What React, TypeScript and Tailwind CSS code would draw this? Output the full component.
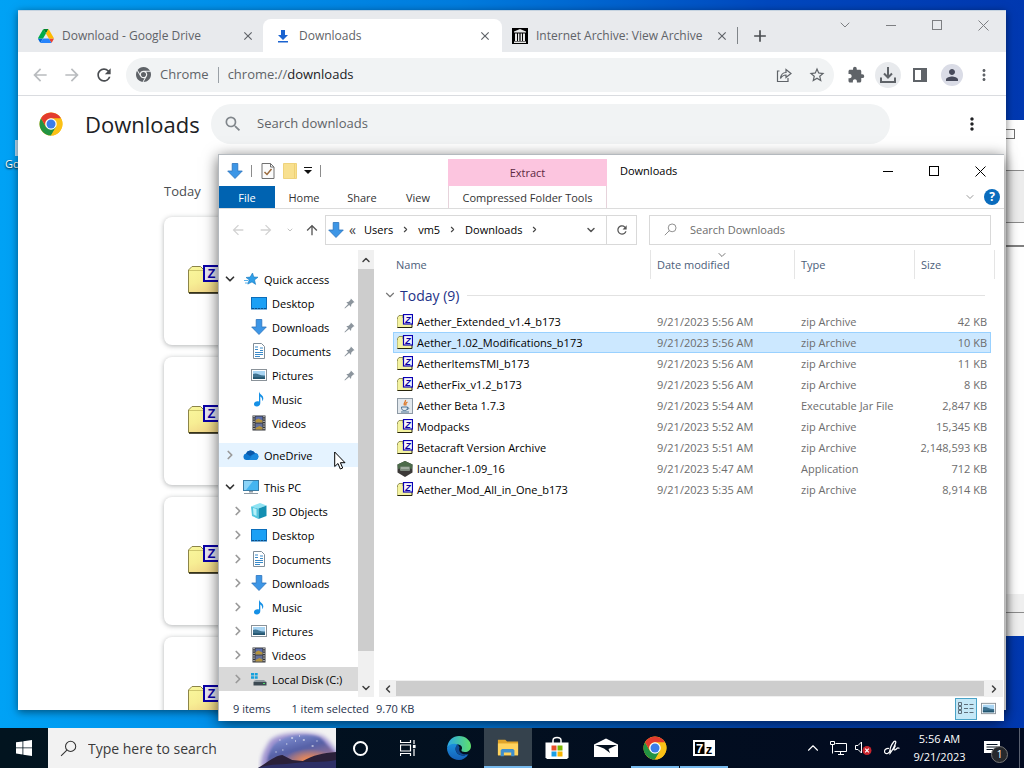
import type { ReactNode } from 'react';
import clsx from 'clsx';
import {
  MdAdd,
  MdArrowBack,
  MdArrowForward,
  MdClose,
  MdExtension,
  MdMoreVert,
  MdPerson,
  MdRefresh,
  MdSearch,
  MdStarOutline,
} from 'react-icons/md';
import { FaChrome } from 'react-icons/fa6';
import { ChevronDown, ChevronRight, ChevronUp, ChevronLeft } from 'lucide-react';

type IconProps = { className?: string };

/* ---------- icons ---------- */

function ChromeLogo({ className }: IconProps) {
  return (
    <svg viewBox="0 0 48 48" className={className} aria-hidden="true">
      <circle cx="24" cy="24" r="23" fill="#fbc116" />
      <path d="M4.1 12.5 A23 23 0 0 0 24 47 L34 29.8 L24 24 L14 29.8Z" fill="#229342" />
      <path d="M43.9 12.5 A23 23 0 0 1 24 47 L34 29.8 A11.5 11.5 0 0 0 24 12.5Z" fill="#fbc116" />
      <path d="M4.1 12.5 A23 23 0 0 1 43.9 12.5 H24 A11.5 11.5 0 0 0 14 29.8Z" fill="#e33b2e" />
      <circle cx="24" cy="24" r="11.5" fill="#fff" />
      <circle cx="24" cy="24" r="9" fill="#3b7de8" />
    </svg>
  );
}

function DriveLogo({ className }: IconProps) {
  return (
    <svg viewBox="0 0 88 78" className={className} aria-hidden="true">
      <path d="M6.6 66.9l3.9 6.6c.8 1.4 2 2.5 3.3 3.3L27.5 53H0c0 1.5.4 3.1 1.2 4.5z" fill="#0066da" />
      <path d="M43.7 25L29.9 1.2c-1.4.8-2.5 1.9-3.3 3.3L1.2 48.5A9 9 0 0 0 0 53h27.5z" fill="#00ac47" />
      <path d="M73.6 76.8c1.3-.8 2.5-1.9 3.3-3.3l1.6-2.8 7.6-13.2c.8-1.4 1.2-3 1.2-4.5H59.8l5.9 11.5z" fill="#ea4335" />
      <path d="M43.7 25L57.4 1.2C56.1.4 54.5 0 52.9 0H34.4c-1.6 0-3.2.5-4.5 1.2z" fill="#00832d" />
      <path d="M59.8 53H27.5L13.8 76.8c1.3.8 2.9 1.2 4.5 1.2h50.8c1.6 0 3.2-.5 4.5-1.2z" fill="#2684fc" />
      <path d="M73.4 26.5L60.7 4.5c-.8-1.4-2-2.5-3.3-3.3L43.7 25l16.1 28h27.5c0-1.5-.4-3.1-1.2-4.5z" fill="#ffba00" />
    </svg>
  );
}

function DownloadTabIcon({ className }: IconProps) {
  return (
    <svg viewBox="0 0 16 16" className={className} aria-hidden="true">
      <path d="M6 2h4v5h3l-5 5-5-5h3zM3 13h10v1.5H3z" fill="#1a63d0" />
    </svg>
  );
}

function ArchiveIcon({ className }: IconProps) {
  return (
    <svg viewBox="0 0 16 16" className={className} aria-hidden="true">
      <rect width="16" height="16" fill="#000" />
      <path d="M8 1l6 2.5v1H2v-1zM3 5.5h2V13H3zM6 5.5h1.4V13H6zM8.6 5.5H10V13H8.6zM11 5.5h2V13h-2zM2 13.5h12V15H2z" fill="#e8e8e8" />
    </svg>
  );
}

function ShareIcon({ className }: IconProps) {
  return (
    <svg viewBox="0 0 16 16" className={className} fill="none" stroke="currentColor" strokeWidth="1.2" aria-hidden="true">
      <path d="M3.5 4H1.5v10.5H12V11" />
      <path d="M4.5 11.5C5 7.5 7.5 5.5 10 5.5V2.5L15 6.5L10 10.5V8C7.5 8 6 9 4.5 11.5Z" />
    </svg>
  );
}

function TrayDownloadIcon({ className }: IconProps) {
  return (
    <svg viewBox="0 0 16 16" className={className} fill="none" stroke="currentColor" strokeWidth="2" aria-hidden="true">
      <path d="M8 0v10M4 6.5l4 4 4-4M1 10.5V15h14v-4.5" />
    </svg>
  );
}

function SidePanelIcon({ className }: IconProps) {
  return (
    <svg viewBox="0 0 16 16" className={className} aria-hidden="true">
      <path d="M1 1h14v14H1zM3 3v10h6V3z" fillRule="evenodd" fill="currentColor" />
    </svg>
  );
}

function ZipIcon({ className }: IconProps) {
  return (
    <svg viewBox="0 0 16 16" className={className} aria-hidden="true">
      <path d="M.5 13.500V3.500L2 1.500h4v12z" fill="#f4f3a0" stroke="#7d7a3c" strokeWidth=".8" />
      <path d="M.5 5.500L2 4h13v9.500H.5z" fill="#f4f3a0" />
      <path d="M.5 13.500h14.500V10" fill="none" stroke="#26240c" />
      <rect x="6.500" y=".5" width="9" height="9.500" fill="#f4f4fc" stroke="#0a00b4" strokeWidth="1.200" />
      <text x="11" y="8.500" textAnchor="middle" fontFamily="Liberation Sans, sans-serif" fontWeight="700" fontStyle="italic" fontSize="9" fill="#0a00a0">
        Z
      </text>
    </svg>
  );
}

function LargeZipIcon({ className }: IconProps) {
  return (
    <svg viewBox="0 0 36 29" className={className} aria-hidden="true">
      <defs>
        <linearGradient id="folder-body" x1="0" x2=".4" y1="0" y2="1">
          <stop offset="0" stopColor="#f9f79c" />
          <stop offset=".6" stopColor="#f7ee94" />
          <stop offset="1" stopColor="#f2d98a" />
        </linearGradient>
      </defs>
      <path d="M.5 27.500V5l3.500-3.500h8.500L16 5h18v22.500z" fill="url(#folder-body)" stroke="#8c8548" />
      <path d="M1 5.500h15" stroke="#cfc76e" />
      <path d="M1 28h34" stroke="#1c1a08" strokeWidth="1.500" />
      <rect x="16" y="1" width="15" height="15" fill="#e6e6f4" stroke="#0a00a8" strokeWidth="2" />
      <text x="23.500" y="13" textAnchor="middle" fontFamily="Liberation Sans, sans-serif" fontWeight="700" fontSize="13" fill="#0a00a8">
        Z
      </text>
    </svg>
  );
}

function JarIcon({ className }: IconProps) {
  return (
    <svg viewBox="0 0 16 16" className={className} aria-hidden="true">
      <rect x=".5" y=".5" width="15" height="15" fill="#e2e8ed" stroke="#8d99a4" />
      <path d="M8.5 2C9 4 6 4.500 7.500 7.500M10.500 4C8 5 8.500 6 9 7.500" stroke="#dd7a2b" strokeWidth="1.300" fill="none" />
      <path d="M4.500 9h6c0 3-1 3.500-3 3.500s-3-.5-3-3.500zM10.500 9.500c2 0 1.500 2-.5 2M4 14h8" stroke="#4d7495" fill="none" />
    </svg>
  );
}

function LauncherIcon({ className }: IconProps) {
  return (
    <svg viewBox="0 0 16 16" className={className} aria-hidden="true">
      <path d="M8 0l7.500 3.500v8L8 16 .5 11.500v-8z" fill="#3c3a38" />
      <path d="M8 0l7.500 3.500L15 8 8 6.500 1 8 .5 3.500z" fill="#4c6b4a" />
      <rect x="3" y="5.500" width="10" height="4.500" rx="1" fill="#7f8c7f" />
      <path d="M4 7h8" stroke="#c2cdc2" />
    </svg>
  );
}

function BlueArrow({ className }: IconProps) {
  return (
    <svg viewBox="0 0 16 16" className={className} aria-hidden="true">
      <path d="M5.200.5h5.600v7.500h4.500L8 15.500.7 8h4.500z" fill="#3d96e6" stroke="#2a72bd" strokeWidth=".8" />
    </svg>
  );
}

function DesktopIcon({ className }: IconProps) {
  return (
    <svg viewBox="0 0 16 16" className={className} aria-hidden="true">
      <rect x=".5" y="2.500" width="15" height="11.500" fill="#1ba0f5" stroke="#0b6dba" />
      <path d="M1 13.500h14" stroke="#0a4f88" strokeDasharray="2 1" />
    </svg>
  );
}

function DocumentIcon({ className }: IconProps) {
  return (
    <svg viewBox="0 0 16 16" className={className} aria-hidden="true">
      <path d="M2.500.5h8l3 3v12h-11z" fill="#fff" stroke="#7f8d99" />
      <path d="M4 4h3M9 5h3M4 6.500h3M9 7.500h3M4 9.500h8M4 11.500h8M4 13.500h5" stroke="#3a8ac9" />
    </svg>
  );
}

function PictureIcon({ className }: IconProps) {
  return (
    <svg viewBox="0 0 16 16" className={className} aria-hidden="true">
      <rect x=".5" y="2.500" width="15" height="11" fill="#fff" stroke="#8a9299" />
      <rect x="2" y="4" width="12" height="8" fill="#a9d5f3" />
      <path d="M2 7c4-2 6 2 12 1.500V12H2z" fill="#3f7391" />
      <path d="M2 10c4 1 8-.5 12 .5V12H2z" fill="#24566f" />
    </svg>
  );
}

function MusicIcon({ className }: IconProps) {
  return (
    <svg viewBox="0 0 16 16" className={className} aria-hidden="true">
      <path d="M8 .5c.5 3 4.800 3.500 4.300 7.500-.2 1-.6 1.500-1.200 2 .5-2.500-.8-4-1.800-4.500V12c0 2-1.500 3.500-3.500 3.500S3 14.500 3 13c0-2 2.500-3.300 5-2.500z" fill="#1590e6" />
    </svg>
  );
}

function VideoIcon({ className }: IconProps) {
  return (
    <svg viewBox="0 0 16 16" className={className} aria-hidden="true">
      <rect x="1.500" y=".5" width="13" height="15" fill="#34363a" />
      <path d="M3 1v14M13 1v14" stroke="#e2e2e2" strokeWidth="1.200" strokeDasharray="1.200 1.200" />
      <rect x="4.500" y="1.500" width="7" height="6" fill="#5c6fae" />
      <rect x="4.500" y="8.500" width="7" height="6" fill="#64719c" />
      <path d="M4.500 5l3-1.500 4 2v2h-7zM4.500 13l4-2 3 1.500v2h-7z" fill="#b4933d" />
    </svg>
  );
}

function StarIcon({ className }: IconProps) {
  return (
    <svg viewBox="0 0 16 16" className={className} aria-hidden="true">
      <path d="M9.500 2l1.300 4 4.200.2-3.500 2.700 1.100 4.500-3.600-2.500-4.200 2.200 1.400-4.300L3 6.500l4.100-.4z" fill="#2f9fe8" stroke="#1677bd" strokeWidth=".6" />
      <path d="M1 9.500h4M2 12h3" stroke="#58b1ec" />
    </svg>
  );
}

function CloudIcon({ className }: IconProps) {
  return (
    <svg viewBox="0 0 16 16" className={className} aria-hidden="true">
      <path d="M3.500 13A3.300 3.300 0 0 1 3 6.500a5 5 0 0 1 9-.5 3.600 3.600 0 0 1 1 7z" fill="#0f78d0" />
      <path d="M3 6.500a5 5 0 0 1 9-.5L7 9z" fill="#0b57a8" />
      <path d="M6 13l3-4.500 4-2a3.400 3.400 0 0 1 0 6.500z" fill="#1c8ade" />
    </svg>
  );
}

function PcIcon({ className }: IconProps) {
  return (
    <svg viewBox="0 0 16 16" className={className} aria-hidden="true">
      <rect x=".5" y="1.500" width="15" height="10" fill="#45b5f0" stroke="#3a7ca5" />
      <path d="M1 2h9L3 11H1z" fill="#8bd4f8" />
      <path d="M6 12h4v1.500H6zM1 14h14v1H1z" fill="#8c99a3" />
    </svg>
  );
}

function CubeIcon({ className }: IconProps) {
  return (
    <svg viewBox="0 0 16 16" className={className} aria-hidden="true">
      <path d="M0 3.500L9 0l6.500 2.500-8 3z" fill="#8fe3f3" />
      <path d="M0 3.500l7.500 2V16L1 13z" fill="#52c7e0" />
      <path d="M7.500 5.500l8-3v10.500L7.500 16z" fill="#138fb2" />
      <path d="M2 5l3.500 1v7L2.500 11.500z" fill="#b5f0f8" />
    </svg>
  );
}

function DiskIcon({ className }: IconProps) {
  return (
    <svg viewBox="0 0 16 16" className={className} aria-hidden="true">
      <path d="M0 2h3v2.500H0zM3.700 2h3v2.500h-3zM0 5.200h3v2.500H0zM3.700 5.200h3v2.500h-3z" fill="#16a1dd" />
      <path d="M2.500 10L5 9h8l2.500 2H3z" fill="#8d979e" />
      <path d="M2.500 11h13v3.500h-13z" fill="#3d4a53" />
      <path d="M12 12.500h2" stroke="#4fe06a" />
    </svg>
  );
}

function PinIcon({ className }: IconProps) {
  return (
    <svg viewBox="0 0 12 12" className={className} aria-hidden="true">
      <path d="M7.500.5l4 4-1.200.4-2.300 2.300-.4 2.500-2-2L1 11.500.5 11l4-4.500-2-2 2.600-.5L7.200 1.800z" fill="#8c959d" />
    </svg>
  );
}

function Magnifier({ className }: IconProps) {
  return (
    <svg viewBox="0 0 16 16" className={className} fill="none" stroke="currentColor" aria-hidden="true">
      <circle cx="10" cy="6" r="4.800" />
      <path d="M6.500 9.500L1 15" />
    </svg>
  );
}

function EdgeIcon({ className }: IconProps) {
  return (
    <svg viewBox="0 0 24 24" className={className} aria-hidden="true">
      <defs>
        <linearGradient id="edge-top" x1="0" x2="1">
          <stop offset="0" stopColor="#2aa6e8" />
          <stop offset="1" stopColor="#5fe06b" />
        </linearGradient>
        <linearGradient id="edge-low" x1="0" x2="0" y1="0" y2="1">
          <stop offset="0" stopColor="#1b8fdc" />
          <stop offset="1" stopColor="#1460b8" />
        </linearGradient>
      </defs>
      <path d="M0 12C1 4 6 0 12 0c7 0 12 5 12 10 0 4-3 6-6 6-2.500 0-4-1-3.500-2 1-1.500 1-4.500-3-5.500C7 7.500 2 9 0 12z" fill="url(#edge-top)" />
      <path d="M0 12c2-4 7-5 11-3.500C8 10 7.500 16 12 18.500c3 1.600 6 1.200 9.500-.5C19 22 15.500 24 12 24 5 24 0 18.500 0 12z" fill="url(#edge-low)" />
      <path d="M11 8.500C7.500 10 7.500 16 12 18.500c3 1.600 6 1.200 9.500-.5-7 1.500-10.500-2.500-9-6.500z" fill="#0f4a94" />
    </svg>
  );
}

function FolderTaskIcon({ className }: IconProps) {
  return (
    <svg viewBox="0 0 24 20" className={className} aria-hidden="true">
      <path d="M1 1h8l2 2h12v15H1z" fill="#e0a42a" />
      <path d="M1 5h22v13H1z" fill="#ffd35e" />
      <path d="M4 19v-6.500l1.500-1.500h12L19 12.500V19h-3.500v-4h-8v4z" fill="#3f8fcd" />
    </svg>
  );
}

function StoreIcon({ className }: IconProps) {
  return (
    <svg viewBox="0 0 24 24" className={className} aria-hidden="true">
      <path d="M8 7V4.500C8 3 9.500 1.500 12 1.500s4 1.500 4 3V7" fill="none" stroke="#fff" strokeWidth="1.500" />
      <path d="M.5 6.500h23v15l-1.500 1.500H2L.5 21.500z" fill="#fff" />
      <path d="M6.500 9.500H11.500v5h-5z" fill="#e8502c" />
      <path d="M12.500 9.500h5v5h-5z" fill="#7cb700" />
      <path d="M6.500 15.500h5v5h-5z" fill="#1c9fe6" />
      <path d="M12.500 15.500h5v5h-5z" fill="#f8b400" />
    </svg>
  );
}

function MailIcon({ className }: IconProps) {
  return (
    <svg viewBox="0 0 24 20" className={className} aria-hidden="true">
      <path d="M0 6.500L12 .5l12 6V19H0z" fill="#fff" />
      <path d="M1 7h22l-8.500 4 1.500 4L10 10.500z" fill="#04101f" />
    </svg>
  );
}

function SevenZipIcon({ className }: IconProps) {
  return (
    <svg viewBox="0 0 22 16" className={className} aria-hidden="true">
      <rect width="22" height="16" fill="#fff" />
      <rect x="2" y="2" width="9.500" height="12" fill="#000" />
      <text x="6.700" y="12.500" textAnchor="middle" fontFamily="Liberation Sans, sans-serif" fontWeight="700" fontSize="13" fill="#fff">
        7
      </text>
      <text x="16" y="14" textAnchor="middle" fontFamily="Liberation Sans, sans-serif" fontWeight="700" fontSize="13" fill="#000">
        z
      </text>
    </svg>
  );
}

function SearchArt({ className }: IconProps) {
  return (
    <svg viewBox="0 0 80 40" preserveAspectRatio="none" className={className} aria-hidden="true">
      <defs>
        <linearGradient id="sky" x1="0" x2=".6" y1="0" y2="1">
          <stop offset="0" stopColor="#8f9fe0" />
          <stop offset=".5" stopColor="#5560a6" />
          <stop offset="1" stopColor="#b77a8e" />
        </linearGradient>
        <radialGradient id="sun" cx=".6" cy=".75" r=".35">
          <stop offset="0" stopColor="#ff8f48" />
          <stop offset="1" stopColor="#ff8f48" stopOpacity="0" />
        </radialGradient>
        <filter id="soft">
          <feGaussianBlur stdDeviation="2" />
        </filter>
        <filter id="haze">
          <feGaussianBlur stdDeviation="1" />
        </filter>
      </defs>
      <path d="M3 40C3 26 8 20 12 13c8-10 48-10 57-3 7 6 10 12 15 17v14z" fill="#9d92cf" filter="url(#soft)" />
      <path d="M9 40c0-10 2-14 5-20C22 5 56 5 64 10c8 7 12 14 18 17v14z" fill="url(#sky)" filter="url(#haze)" />
      <path d="M9 40c0-10 2-14 5-20C22 5 56 5 64 10c8 7 12 14 18 17v14z" fill="url(#sun)" />
      <path d="M22 12h1M29 16h1M34 10h2M42 8h1M46 12h2M55 18h2M60 13h1M18 24h1M25 22h1M38 13h1" stroke="#fff" strokeWidth="1.200" />
      <path d="M0 40c10-6 19-13 25-13l10 5 11 1c11-6 20-8 34-9v16z" fill="#2a2039" />
      <path d="M0 40c14-5 26-3 38-5s28 0 42-3v8z" fill="#2d2f66" />
    </svg>
  );
}

/* ---------- shared ---------- */

function WindowButtons({ tone }: { tone: string }) {
  return (
    <div className={clsx('flex', tone)}>
      <button aria-label="Minimize" className="flex h-7 w-[46px] items-center justify-center">
        <span className="h-px w-[10px] bg-current" />
      </button>
      <button aria-label="Maximize" className="flex h-7 w-[46px] items-center justify-center">
        <span className="size-[10px] border border-current" />
      </button>
      <button aria-label="Close" className="flex h-7 w-[46px] items-center justify-center">
        <svg viewBox="0 0 11 11" className="size-[11px]" stroke="currentColor" aria-hidden="true">
          <path d="M.5.5l10 10M10.500.5l-10 10" />
        </svg>
      </button>
    </div>
  );
}

/* ---------- browser ---------- */

type TabProps = { icon: ReactNode; title: string; active?: boolean };

function BrowserTab({ icon, title, active }: TabProps) {
  return (
    <div
      className={clsx(
        'flex h-[33px] min-w-0 shrink items-center gap-2 text-[12px] text-[#5f6368]',
        active ? 'w-[239px] rounded-t-lg bg-white pl-3 pr-[10px]' : 'w-[235px] pl-[10px] pr-2',
      )}
    >
      {icon}
      <button className="min-w-0 flex-1 truncate text-left">{title}</button>
      <button aria-label={`Close ${title}`}>
        <MdClose className="size-[14px]" />
      </button>
    </div>
  );
}

function BrowserWindow() {
  return (
    <section className="absolute inset-x-[18px] top-[10px] bottom-[58px] flex flex-col overflow-hidden border-t border-[#c5d3e0] bg-white shadow-[0_2px_8px_rgba(0,0,0,0.5)]">
      <div className="flex h-[41px] shrink-0 items-end bg-[#e8eaed]">
        <div className="flex min-w-0 flex-1 pl-[10px]">
          <BrowserTab icon={<DriveLogo className="size-4" />} title="Download - Google Drive" />
          <BrowserTab icon={<DownloadTabIcon className="size-4" />} title="Downloads" active />
          <BrowserTab icon={<ArchiveIcon className="size-4" />} title="Internet Archive: View Archive" />
          <div className="my-2 w-px bg-[#808589]" />
          <button aria-label="New tab" className="px-3 text-[#4a4d51]">
            <MdAdd className="size-5" />
          </button>
        </div>
        <div className="flex items-start self-start text-[#7d7f82]">
          <button aria-label="Search tabs" className="flex h-7 w-[46px] items-center justify-center">
            <ChevronDown className="size-4" strokeWidth={1.5} />
          </button>
          <WindowButtons tone="text-[#7d7f82]" />
        </div>
      </div>

      <div className="flex h-11 shrink-0 items-center border-b border-[#dadce0] pt-[2px] pr-[10px] text-[#5f6368]">
        <button aria-label="Back" className="ml-3 w-8 text-[#b9bcbf]">
          <MdArrowBack className="size-5" />
        </button>
        <button aria-label="Forward" className="w-8 text-[#b9bcbf]">
          <MdArrowForward className="size-5" />
        </button>
        <button aria-label="Reload" className="w-8 text-[#4a4d51]">
          <MdRefresh className="size-5" />
        </button>
        <div className="flex h-[34px] min-w-0 flex-1 items-center rounded-full bg-[#f1f3f4] pr-2 pl-[10px] text-[13px]">
          <FaChrome className="size-[15px]" />
          <span className="ml-[9px]">Chrome</span>
          <span className="mx-[9px] h-4 w-px bg-[#9aa0a6]" />
          <label htmlFor="omnibox">chrome://</label>
          <input id="omnibox" defaultValue="downloads" className="min-w-0 flex-1 bg-transparent text-[#202124] outline-none" />
          <button aria-label="Share" className="w-8">
            <ShareIcon className="size-4" />
          </button>
          <button aria-label="Bookmark">
            <MdStarOutline className="size-[18px]" />
          </button>
        </div>
        <div className="ml-[10px] flex items-center gap-2">
          <button aria-label="Extensions" className="flex w-6 justify-center">
            <MdExtension className="size-[18px]" />
          </button>
          <button aria-label="Recent downloads" className="-mx-px flex size-[26px] items-center justify-center rounded-full bg-[#e8eaed]">
            <TrayDownloadIcon className="size-4" />
          </button>
          <button aria-label="Side panel" className="flex w-6 justify-center">
            <SidePanelIcon className="size-4" />
          </button>
          <button aria-label="Profile" className="ml-px flex size-[22px] items-center justify-center rounded-full bg-[#dadce6]">
            <MdPerson className="size-[18px] text-[#474a5a]" />
          </button>
          <button aria-label="Menu" className="ml-px flex w-6 justify-center">
            <MdMoreVert className="size-[18px]" />
          </button>
        </div>
      </div>

      <div className="flex h-14 shrink-0 items-center pl-[21px]">
        <ChromeLogo className="size-6 shrink-0" />
        <h1 className="ml-[22px] w-[126px] text-[22px] leading-7 font-medium text-[#202124]">Downloads</h1>
        <div className="flex h-10 w-full max-w-[679px] items-center gap-[14px] rounded-full bg-[#f1f3f4] px-3">
          <MdSearch className="size-5 text-[#80868b]" />
          <input
            type="search"
            aria-label="Search downloads"
            placeholder="Search downloads"
            className="min-w-0 flex-1 bg-transparent text-[13px] outline-none placeholder:text-[#5f6368]"
          />
        </div>
        <button aria-label="More actions" className="ml-auto mr-6 text-[#202124]">
          <MdMoreVert className="size-5" />
        </button>
      </div>

      <main className="min-h-0 flex-1 overflow-hidden px-[146px] pt-7">
        <h2 className="text-[13px] leading-[22px] text-[#4a4d51]">Today</h2>
        <ul className="mt-[15px] flex flex-col gap-3">
          {[1, 2, 3, 4].map((n) => (
            <li key={n} className="h-32 rounded-lg bg-white px-6 pt-12 shadow-[0_1px_5px_rgba(60,64,67,0.4)]">
              <LargeZipIcon className="h-[29px] w-9" />
            </li>
          ))}
        </ul>
      </main>
    </section>
  );
}

/* ---------- window behind ---------- */

function BackWindow() {
  return (
    <section className="absolute top-[120px] right-0 bottom-[132px] w-40 bg-white">
      <div className="flex h-[51px] items-start justify-end border-b border-[#8c8c8c] pt-2 pr-[9px]">
        <span className="mt-px size-[10px] border border-[#6d6d6d]" />
      </div>
      <div className="h-[52px] border-b border-[#8c8c8c] bg-[#ededed]" />
      <div className="h-6 border-b-2 border-[#808080]" />
      <div className="absolute inset-x-0 bottom-0 h-[42px] bg-[#f0f0f0]">
        <div className="h-[19px] border-b border-[#8c8c8c]" />
      </div>
    </section>
  );
}

/* ---------- explorer ---------- */

type TreeItem = { label: string; icon: ReactNode; pinned?: boolean; state?: 'hover' | 'selected' };

const quickAccess: TreeItem[] = [
  { label: 'Desktop', icon: <DesktopIcon className="size-4" />, pinned: true },
  { label: 'Downloads', icon: <BlueArrow className="size-4" />, pinned: true },
  { label: 'Documents', icon: <DocumentIcon className="size-4" />, pinned: true },
  { label: 'Pictures', icon: <PictureIcon className="size-4" />, pinned: true },
  { label: 'Music', icon: <MusicIcon className="size-4" /> },
  { label: 'Videos', icon: <VideoIcon className="size-4" /> },
];

const thisPc: TreeItem[] = [
  { label: '3D Objects', icon: <CubeIcon className="size-4" /> },
  { label: 'Desktop', icon: <DesktopIcon className="size-4" /> },
  { label: 'Documents', icon: <DocumentIcon className="size-4" /> },
  { label: 'Downloads', icon: <BlueArrow className="size-4" /> },
  { label: 'Music', icon: <MusicIcon className="size-4" /> },
  { label: 'Pictures', icon: <PictureIcon className="size-4" /> },
  { label: 'Videos', icon: <VideoIcon className="size-4" /> },
  { label: 'Local Disk (C:)', icon: <DiskIcon className="size-4" />, state: 'selected' },
];

type TreeRowProps = TreeItem & { level: 0 | 1; arrow?: 'open' | 'closed' };

function TreeRow({ label, icon, pinned, state, level, arrow }: TreeRowProps) {
  return (
    <button
      className={clsx(
        'flex h-6 w-full items-center pr-[3px] text-left text-black',
        level === 0 ? 'pl-1' : 'pl-3',
        state === 'hover' && 'bg-[#e5f3ff]',
        state === 'selected' && 'bg-[#d9d9d9]',
      )}
    >
      <span className="flex w-5 shrink-0 justify-start">
        {arrow === 'open' && <ChevronDown className="size-[14px] text-[#333]" strokeWidth={3} />}
        {arrow === 'closed' && <ChevronRight className="size-[14px] text-[#9a9a9a]" strokeWidth={3} />}
      </span>
      {icon}
      <span className="ml-[5px] flex-1 whitespace-nowrap">{label}</span>
      {pinned && <PinIcon className="size-[11px]" />}
    </button>
  );
}

function NavPane() {
  return (
    <div className="flex w-[155px] shrink-0">
      <nav aria-label="Folders" className="min-w-0 flex-1 overflow-hidden pt-[17px]">
        <TreeRow label="Quick access" icon={<StarIcon className="size-4" />} level={0} arrow="open" />
        {quickAccess.map((item) => (
          <TreeRow key={item.label} {...item} level={1} />
        ))}
        <div className="my-2">
          <TreeRow label="OneDrive" icon={<CloudIcon className="size-4" />} level={0} arrow="closed" state="hover" />
        </div>
        <TreeRow label="This PC" icon={<PcIcon className="size-4" />} level={0} arrow="open" />
        {thisPc.map((item) => (
          <TreeRow key={item.label} {...item} level={1} arrow="closed" />
        ))}
      </nav>
      <div className="flex w-4 flex-col items-center bg-[#f0f0f0] pt-px text-[#404040]">
        <button aria-label="Scroll up" className="flex h-[18px] items-center">
          <ChevronUp className="size-3" strokeWidth={3} />
        </button>
        <div className="w-full flex-1 pb-7">
          <div className="h-full bg-[#cdcdcd]" />
        </div>
        <button aria-label="Scroll down" className="flex h-[18px] items-center">
          <ChevronDown className="size-3" strokeWidth={3} />
        </button>
      </div>
    </div>
  );
}

type FileKind = 'zip' | 'jar' | 'app';
type FileRow = { name: string; date: string; type: string; size: string; kind: FileKind };

const files: FileRow[] = [
  { name: 'Aether_Extended_v1.4_b173', date: '9/21/2023 5:56 AM', type: 'zip Archive', size: '42 KB', kind: 'zip' },
  { name: 'Aether_1.02_Modifications_b173', date: '9/21/2023 5:56 AM', type: 'zip Archive', size: '10 KB', kind: 'zip' },
  { name: 'AetherItemsTMI_b173', date: '9/21/2023 5:56 AM', type: 'zip Archive', size: '11 KB', kind: 'zip' },
  { name: 'AetherFix_v1.2_b173', date: '9/21/2023 5:56 AM', type: 'zip Archive', size: '8 KB', kind: 'zip' },
  { name: 'Aether Beta 1.7.3', date: '9/21/2023 5:54 AM', type: 'Executable Jar File', size: '2,847 KB', kind: 'jar' },
  { name: 'Modpacks', date: '9/21/2023 5:52 AM', type: 'zip Archive', size: '15,345 KB', kind: 'zip' },
  { name: 'Betacraft Version Archive', date: '9/21/2023 5:51 AM', type: 'zip Archive', size: '2,148,593 KB', kind: 'zip' },
  { name: 'launcher-1.09_16', date: '9/21/2023 5:47 AM', type: 'Application', size: '712 KB', kind: 'app' },
  { name: 'Aether_Mod_All_in_One_b173', date: '9/21/2023 5:35 AM', type: 'zip Archive', size: '8,914 KB', kind: 'zip' },
];

const fileIcons: Record<FileKind, ReactNode> = {
  zip: <ZipIcon className="size-4 shrink-0" />,
  jar: <JarIcon className="size-4 shrink-0" />,
  app: <LauncherIcon className="size-4 shrink-0" />,
};

function FileList() {
  return (
    <div className="min-h-0 flex-1 overflow-hidden pr-2 pl-[19px]">
      <table className="w-full table-fixed border-separate border-spacing-0 text-left text-[#6d6d6d]">
        <colgroup>
          <col />
          <col className="w-36" />
          <col className="w-[120px]" />
          <col className="w-[76px]" />
          <col className="w-1" />
        </colgroup>
        <thead className="text-[#4c607a]">
          <tr className="h-[29px]">
            <th className="border-r border-[#e5e5e5] pl-[3px] font-normal">Name</th>
            <th className="relative border-r border-[#e5e5e5] pl-[6px] font-normal">
              Date modified
              <ChevronDown className="absolute -top-px left-[65px] size-3 text-[#777]" strokeWidth={2} />
            </th>
            <th className="border-r border-[#e5e5e5] pl-[6px] font-normal">Type</th>
            <th className="pl-[6px] font-normal">Size</th>
            <td className="border-r border-[#e5e5e5]" />
          </tr>
        </thead>
        <tbody>
          <tr className="h-8">
            <th colSpan={5} className="p-0 font-normal">
              <button className="-ml-[10px] flex w-full items-center text-[14px] text-[#1e3287]">
                <ChevronDown className="mr-[3px] size-[14px] text-[#777]" strokeWidth={2} />
                Today (9)
                <span className="ml-2 h-px flex-1 bg-[#e2e2e2]" />
              </button>
            </th>
          </tr>
          {files.map((file) => {
            const selected = file.name === 'Aether_1.02_Modifications_b173';
            const cell = selected ? 'border-y border-[#99d1ff] bg-[#cce8ff]' : '';
            return (
              <tr key={file.name} className="h-[21px]">
                <td className={clsx('p-0', cell, selected ? 'border-l pl-[3px]' : 'pl-1')}>
                  <div className="flex items-center gap-1 whitespace-nowrap text-black">
                    {fileIcons[file.kind]}
                    {file.name}
                  </div>
                </td>
                <td className={clsx('p-0 pl-[6px]', cell)}>{file.date}</td>
                <td className={clsx('p-0 pl-[6px]', cell)}>{file.type}</td>
                <td className={clsx('p-0 text-right whitespace-nowrap', cell, selected ? 'border-r pr-[3px]' : 'pr-1')}>
                  {file.size}
                </td>
              </tr>
            );
          })}
        </tbody>
      </table>
    </div>
  );
}

function AddressBar() {
  return (
    <div className="flex h-[41px] shrink-0 items-center pr-[13px] pl-[11px] text-black">
      <button aria-label="Back" className="flex w-7 items-center">
        <MdArrowBack className="size-4 text-[#d2d2d2]" />
      </button>
      <button aria-label="Forward" className="flex w-7 items-center">
        <MdArrowForward className="size-4 text-[#d2d2d2]" />
      </button>
      <button aria-label="Recent locations" className="flex w-[18px] items-center">
        <ChevronDown className="size-2 text-[#c2c2c2]" strokeWidth={3} />
      </button>
      <button aria-label="Up" className="w-[21px] text-[#555]">
        <MdArrowBack className="size-4 rotate-90" />
      </button>
      <div className="flex h-[30px] min-w-0 flex-1 items-center border border-[#d9d9d9]">
        <BlueArrow className="ml-[2px] size-4" />
        <span className="mr-2 ml-[5px] text-[14px] text-[#444]">«</span>
        <div className="flex flex-1 items-center gap-2 whitespace-nowrap">
          <button>Users</button>
          <ChevronRight className="size-[9px] text-[#444]" strokeWidth={3} />
          <button>vm5</button>
          <ChevronRight className="size-[9px] text-[#444]" strokeWidth={3} />
          <button>Downloads</button>
          <ChevronRight className="size-[9px] text-[#444]" strokeWidth={3} />
        </div>
        <button aria-label="Previous locations" className="w-[21px]">
          <ChevronDown className="size-3 text-[#555]" strokeWidth={3} />
        </button>
        <button aria-label="Refresh" className="flex h-full w-[30px] items-center justify-center border-l border-[#d9d9d9]">
          <MdRefresh className="size-[14px] text-[#555]" />
        </button>
      </div>
      <div className="ml-3 flex h-[30px] w-[342px] shrink-0 items-center gap-[13px] border border-[#d9d9d9] px-[14px]">
        <Magnifier className="size-[13px] text-[#777]" />
        <input
          type="search"
          aria-label="Search Downloads"
          placeholder="Search Downloads"
          className="min-w-0 flex-1 bg-transparent outline-none placeholder:text-[#6d6d6d]"
        />
      </div>
    </div>
  );
}

function Ribbon() {
  return (
    <header className="flex h-[54px] shrink-0 border-b border-[#dcdcdc] pr-px text-[#333]">
      <div className="flex w-[229px] shrink-0 flex-col">
        <div className="flex h-[31px] items-center pl-2">
          <BlueArrow className="size-4" />
          <span className="ml-2 h-3 w-px bg-[#8c8c8c]" />
          <button aria-label="Properties" className="ml-[9px]">
            <svg viewBox="0 0 14 16" className="h-4 w-[14px]" fill="none" aria-hidden="true">
              <path d="M1 .5h8.500L13 4v11.500H1z" fill="#fbfbfb" stroke="#707070" />
              <path d="M9.500.5V4H13" stroke="#707070" />
              <path d="M3.500 9l2.500 2.500L10.500 6" stroke="#9b6b3d" strokeWidth="1.500" />
            </svg>
          </button>
          <button aria-label="New folder" className="ml-2">
            <svg viewBox="0 0 14 16" className="h-4 w-[14px]" aria-hidden="true">
              <path d="M.5.5h13v15H.5z" fill="#f8e08f" stroke="#efd37c" />
              <path d="M11.500 1v14" stroke="#efd176" />
            </svg>
          </button>
          <button aria-label="Customize toolbar" className="ml-[7px]">
            <svg viewBox="0 0 8 7" className="h-[7px] w-2" aria-hidden="true">
              <path d="M0 0h8v1H0zM0 3h8L4 7z" fill="#111" />
            </svg>
          </button>
          <span className="ml-2 h-3 w-px bg-[#8c8c8c]" />
        </div>
        <div className="flex flex-1 text-center">
          <button className="w-14 bg-[#0063b1] text-white">File</button>
          <button className="w-[58px]">Home</button>
          <button className="w-[58px]">Share</button>
          <button className="w-[54px]">View</button>
        </div>
      </div>
      <div className="mt-1 flex w-[159px] shrink-0 flex-col border-x border-[#e6d3db]">
        <button className="-mx-px h-[27px] bg-[#fcc5df] text-[#5d2942]">Extract</button>
        <button className="flex-1 whitespace-nowrap">Compressed Folder Tools</button>
      </div>
      <div className="flex min-w-0 flex-1 flex-col">
        <div className="flex items-center justify-between pl-[13px] text-black">
          <h2>Downloads</h2>
          <WindowButtons tone="pt-[2px] text-black" />
        </div>
        <div className="flex flex-1 items-center justify-end gap-2 pr-[3px]">
          <button aria-label="Collapse ribbon">
            <ChevronDown className="size-3 text-[#999]" strokeWidth={2} />
          </button>
          <button aria-label="Help" className="size-4 rounded-full bg-[#0a6cbd] text-[12px] leading-4 font-bold text-white">
            ?
          </button>
        </div>
      </div>
    </header>
  );
}

function ExplorerWindow() {
  return (
    <section className="absolute top-[154px] right-5 bottom-[47px] left-[218px] flex flex-col border-t border-l border-[#b4b9be] bg-white text-[11px] leading-[15px] shadow-[0_3px_14px_rgba(0,0,0,0.6)]">
      <Ribbon />
      <AddressBar />
      <div className="flex min-h-0 flex-1">
        <NavPane />
        <div className="flex min-w-0 flex-1 flex-col pr-px">
          <FileList />
          <div className="ml-[5px] flex h-[17px] items-center bg-[#f0f0f0] text-[#404040]">
            <button aria-label="Scroll left" className="flex w-[17px] justify-center">
              <ChevronLeft className="size-3" strokeWidth={3} />
            </button>
            <div className="h-[15px] flex-1 bg-[#cdcdcd]" />
            <button aria-label="Scroll right" className="flex w-[19px] justify-center">
              <ChevronRight className="size-3" strokeWidth={3} />
            </button>
          </div>
        </div>
      </div>
      <footer className="flex h-6 shrink-0 items-center pr-1 pb-px pl-[14px] text-[#26324d]">
        <span>9 items</span>
        <span className="ml-[21px]">1 item selected</span>
        <span className="ml-[7px]">9.70 KB</span>
        <button aria-label="Details view" className="ml-auto flex h-[22px] w-[22px] items-center justify-center border border-[#4aa3c7] bg-[#c5e8f7]">
          <svg viewBox="0 0 16 13" className="h-[13px] w-4" stroke="#5f6f7b" fill="none" aria-hidden="true">
            <path d="M.5.5h3v3h-3zM.5 4.500h3v3h-3zM.5 8.500h3v3h-3zM6 2.500h4M11.500 2.500h4M6 6.500h4M11.500 6.500h4M6 10.500h4M11.500 10.500h4" />
          </svg>
        </button>
        <button aria-label="Thumbnail view" className="flex h-[22px] w-[23px] items-center justify-center">
          <PictureIcon className="size-[15px]" />
        </button>
      </footer>
    </section>
  );
}

/* ---------- taskbar ---------- */

type TaskButtonProps = { label: string; children: ReactNode; open?: boolean; active?: boolean };

function TaskButton({ label, children, open, active }: TaskButtonProps) {
  return (
    <button
      aria-label={label}
      className={clsx(
        'flex h-full w-12 items-center justify-center border-b-2 pt-[2px]',
        active && 'bg-[#35424d]',
        open ? 'border-[#76b9ed]' : 'border-transparent',
      )}
    >
      {children}
    </button>
  );
}

function Taskbar() {
  return (
    <footer className="absolute inset-x-0 bottom-0 flex h-10 items-center bg-linear-to-r from-[#02141f] to-[#020a20] text-white">
      <TaskButton label="Start">
        <svg viewBox="0 0 16 16" className="size-4" fill="#fff" aria-hidden="true">
          <path d="M0 2.300l6.500-.9v6.100H0zM7.300 1.300L16 0v7.500H7.300zM0 8.300h6.500v6.200L0 13.600zM7.300 8.300H16V16l-8.700-1.200z" />
        </svg>
      </TaskButton>
      <div className="flex h-10 w-72 items-center bg-[#f2f2f2] pl-3 text-[#333]">
        <Magnifier className="size-[17px] shrink-0" />
        <input
          type="search"
          aria-label="Type here to search"
          placeholder="Type here to search"
          className="ml-[11px] min-w-0 flex-1 bg-transparent text-[14px] outline-none placeholder:text-[#3b3b3b]"
        />
        <SearchArt className="h-10 w-[78px] shrink-0" />
      </div>
      <TaskButton label="Cortana">
        <span className="size-[15px] rounded-full border-2 border-white" />
      </TaskButton>
      <TaskButton label="Task View">
        <svg viewBox="0 0 16 16" className="size-4" fill="none" stroke="#fff" strokeWidth="1.200" aria-hidden="true">
          <path d="M.5 0v2.500h10V0M.5 16v-2.500h10V16M.5 5h10v6H.5zM14 0v4M14 9v7" />
          <rect x="13.500" y="5.500" width="1.500" height="2" fill="#fff" />
        </svg>
      </TaskButton>
      <div className="ml-[3px] flex h-full gap-px">
        <TaskButton label="Edge">
          <EdgeIcon className="size-6" />
        </TaskButton>
        <TaskButton label="File Explorer" open active>
          <FolderTaskIcon className="h-5 w-[22px]" />
        </TaskButton>
        <TaskButton label="Store">
          <StoreIcon className="size-6" />
        </TaskButton>
        <TaskButton label="Mail">
          <MailIcon className="h-5 w-6" />
        </TaskButton>
        <TaskButton label="Chrome" open>
          <ChromeLogo className="size-6" />
        </TaskButton>
        <TaskButton label="7-Zip" open>
          <SevenZipIcon className="h-4 w-[22px]" />
        </TaskButton>
      </div>

      <div className="ml-auto flex h-full items-center">
        <button aria-label="Show hidden icons">
          <ChevronUp className="size-[18px]" strokeWidth={1.5} />
        </button>
        <button aria-label="Network" className="ml-2">
          <svg viewBox="0 0 17 15" className="h-[15px] w-[17px]" fill="none" stroke="#fff" aria-hidden="true">
            <path d="M5.500 2.500h11v8h-12M.5.5h4v3h-4zM2.500 3.500v9M8 13.500h6M10.500 10.500v3" />
          </svg>
        </button>
        <button aria-label="Volume muted" className="ml-2">
          <svg viewBox="0 0 17 16" className="h-4 w-[17px]" aria-hidden="true">
            <path d="M.5 5.500h2.500L6.500 2v11L3 9.500H.5z" fill="none" stroke="#fff" />
            <circle cx="12" cy="10.500" r="4.500" fill="#c9252d" />
            <path d="M10.200 8.700l3.600 3.600M13.800 8.700l-3.600 3.600" stroke="#fff" strokeWidth="1.200" />
          </svg>
        </button>
        <button aria-label="Pen" className="ml-3">
          <svg viewBox="0 0 16 16" className="size-4" fill="none" stroke="#fff" strokeWidth="1.200" aria-hidden="true">
            <path d="M5 8.500C2 8 .5 10 .5 11.500s1.500 2.500 3 2c1.500-.6 2.500-2 3-3.500" />
            <path d="M6 13.500c-.5-4 1-8.500 4-12 1.500-1.200 2.300.2 1.500 2-1 3-2.500 6-5.500 10zM11.500 5.500c-1.500 2.500-2 4.500-.8 4.500s2-1.500 2.800-2 .8.500 2 0" />
          </svg>
        </button>
        <button className="w-[79px] text-center text-[11px] leading-[18px]">
          <span className="block">5:56 AM</span>
          <span className="block">9/21/2023</span>
        </button>
        <button aria-label="Notifications" className="relative ml-1 h-full w-8">
          <svg viewBox="0 0 18 18" className="mt-px size-[18px]" aria-hidden="true">
            <path d="M1 1h16v12h-4l-3 4v-4H1z" fill="#fff" />
            <path d="M3.500 4.500h11M3.500 7h11M3.500 9.500h7" stroke="#04101f" />
          </svg>
          <span className="absolute top-[18px] left-2 flex size-[17px] items-center justify-center rounded-full border border-[#777] bg-[#26282c] text-[10px]">
            1
          </span>
        </button>
        <span className="ml-1 h-full w-[5px] border-l border-[#5a6070]" />
      </div>
    </footer>
  );
}

export default function App() {
  return (
    <div className="relative h-screen w-full overflow-hidden bg-[linear-gradient(90deg,#00a2f5,#007cde_45%,#0048be_75%,#0038b0)] font-['Open_Sans','Noto_Sans',sans-serif]">
      <div className="absolute top-[140px] left-[5px] flex flex-col text-[11px] whitespace-nowrap text-white">
        <span className="ml-[10px] h-4 w-8 bg-[#b9dcf5]" />
        <span className="[text-shadow:0_1px_2px_#000]">Google Chrome</span>
      </div>
      <BackWindow />
      <BrowserWindow />
      <ExplorerWindow />
      <Taskbar />
      <svg viewBox="0 0 12 19" className="pointer-events-none absolute top-[451px] left-[334px] h-[19px] w-3" aria-hidden="true">
        <path d="M.7 1v14.500l3.300-3 2.300 5.500 2.400-1-2.300-5.300h4.600z" fill="#fff" stroke="#000" />
      </svg>
    </div>
  );
}
